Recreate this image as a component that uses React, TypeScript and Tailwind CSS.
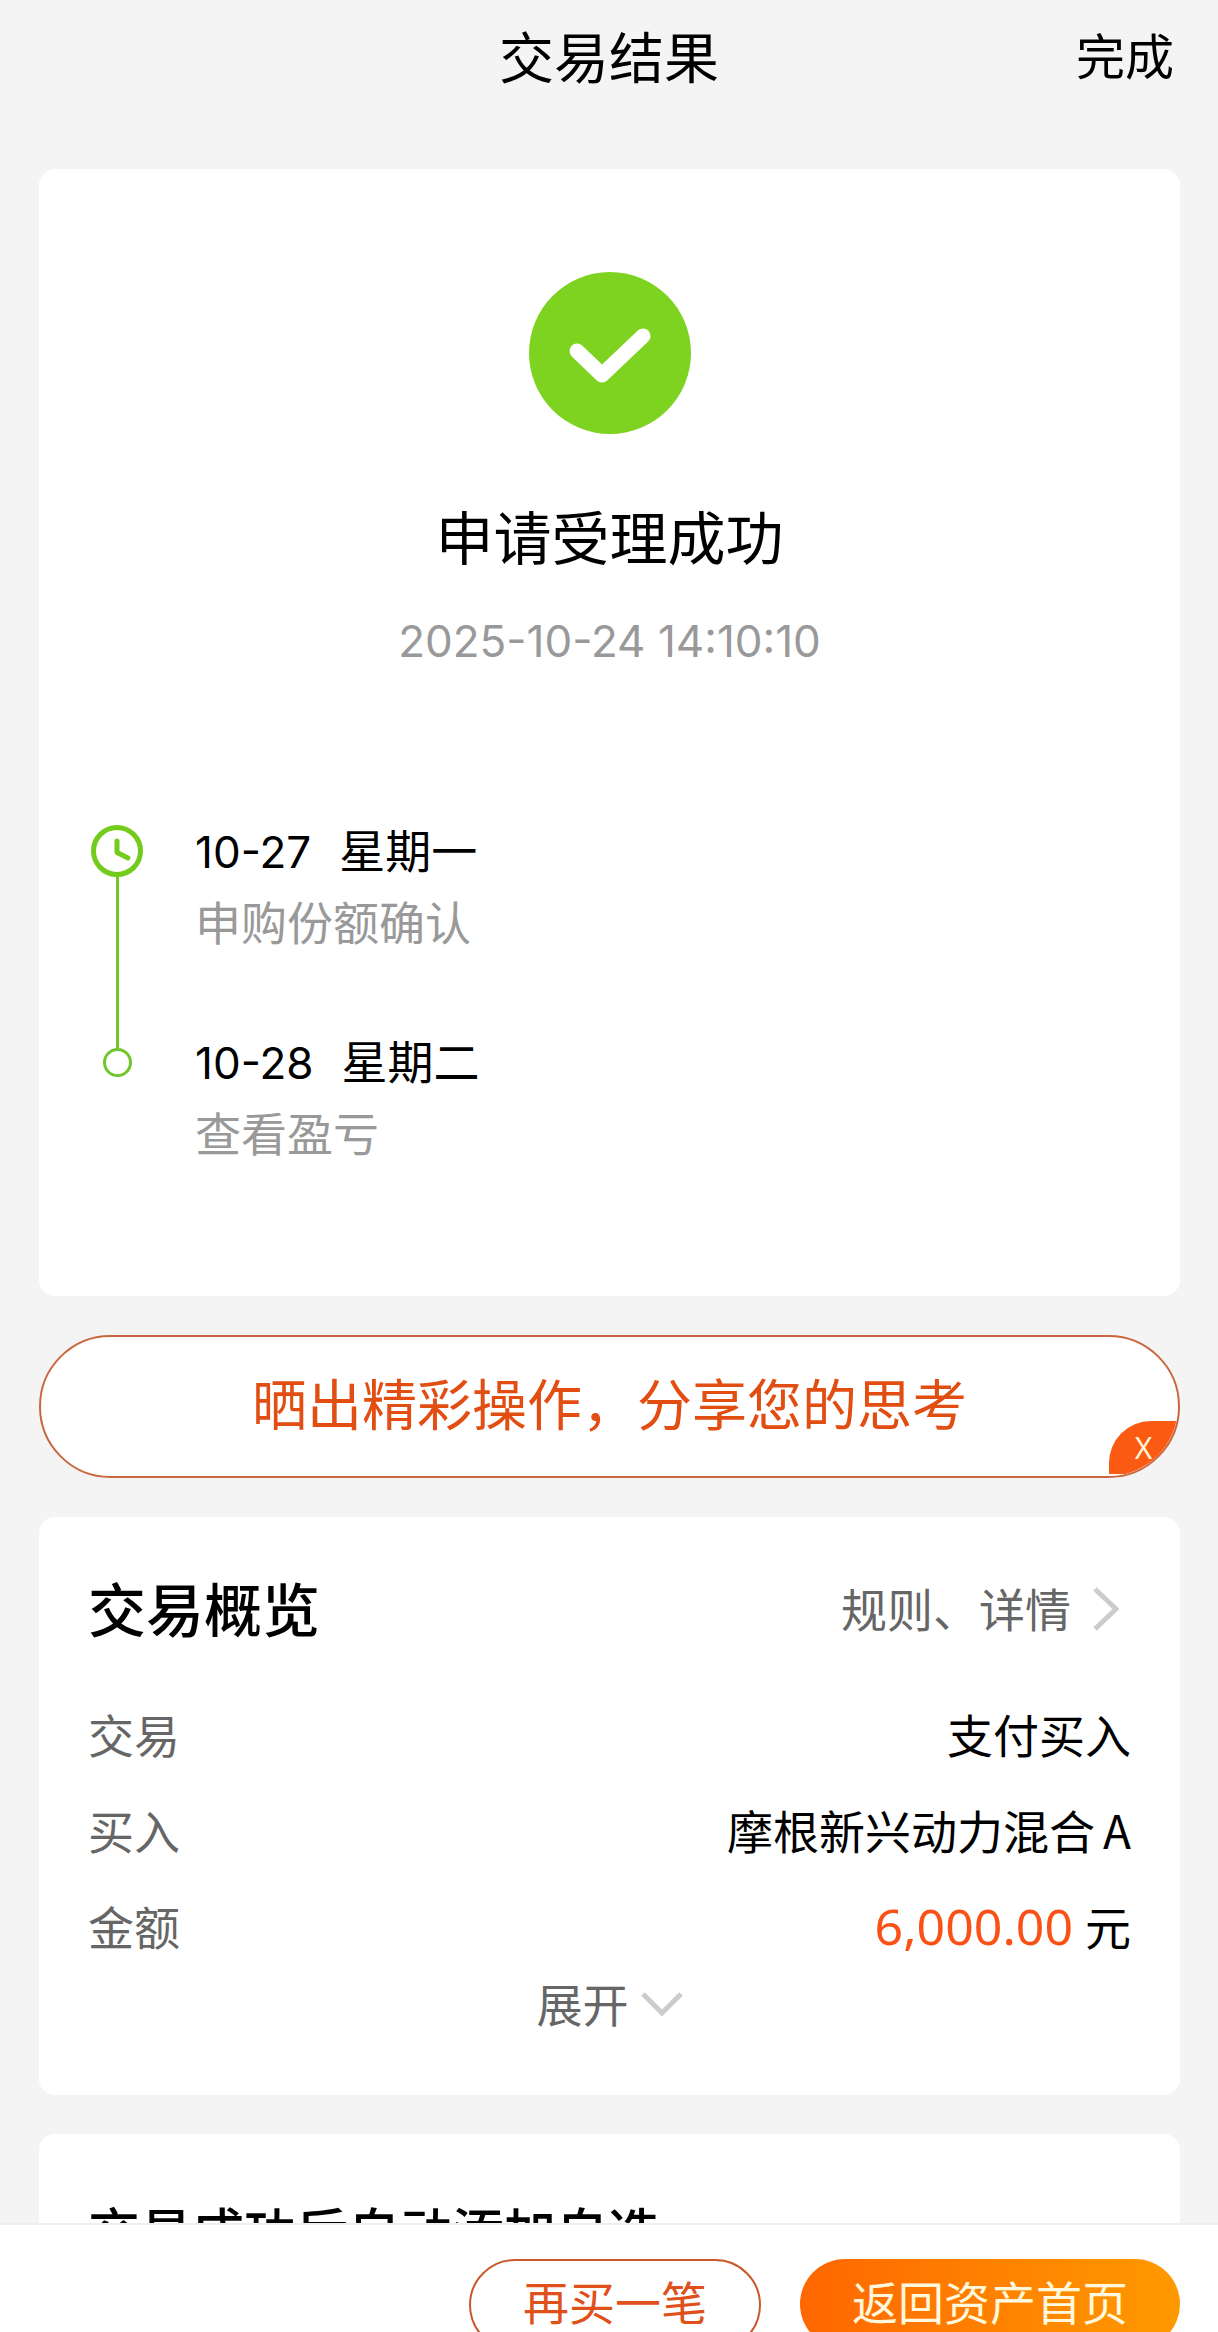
import React from 'react';

interface Step {
  date: string;
  weekday: string;
  note: string;
}

const steps: Step[] = [
  { date: '10-27', weekday: '星期一', note: '申购份额确认' },
  { date: '10-28', weekday: '星期二', note: '查看盈亏' },
];

const SuccessIcon = () => (
  <svg width="162" height="162" viewBox="0 0 162 162" fill="none" aria-hidden="true">
    <circle cx="81" cy="81" r="81" fill="#7ed321" />
    <path
      d="M48 79L73 103L114 64"
      stroke="#fff"
      strokeWidth="15"
      strokeLinecap="round"
      strokeLinejoin="round"
    />
  </svg>
);

const ClockIcon = () => (
  <svg width="52" height="52" viewBox="0 0 52 52" fill="none" stroke="#73cc1c" aria-hidden="true">
    <circle cx="26" cy="26" r="23.5" strokeWidth="5" />
    <path d="M26 16V27.5L37 33" strokeWidth="5" strokeLinecap="round" strokeLinejoin="round" />
  </svg>
);

const Header = () => (
  <header className="grid grid-cols-3 items-center px-[44px] pt-[22px] pb-[83px]">
    <h1 className="col-start-2 text-center text-[55px] leading-[64px]">交易结果</h1>
    <button className="justify-self-end text-[49px] leading-[64px]">完成</button>
  </header>
);

const ResultCard = () => (
  <section className="rounded-2xl bg-white px-[49px] pt-[103px] pb-[137px]">
    <div className="flex flex-col items-center">
      <SuccessIcon />
      <h2 className="mt-[61px] text-[58px] leading-[80px]">申请受理成功</h2>
      <p className="mt-9 font-['Inter','Noto_Sans_CJK_SC',sans-serif] text-[44px] leading-[60px] text-[#999]">
        2025-10-24 14:10:10
      </p>
    </div>

    <div className="mt-[149px] ml-[3px] flex gap-[52px]">
      <div className="flex flex-col items-center pt-[5px]">
        <ClockIcon />
        <span className="h-[171px] w-[3px] bg-[#73c52d]"></span>
        <span className="size-[29px] rounded-full border-[3px] border-[#73c52d]"></span>
      </div>
      <ol className="flex flex-col gap-[83px]">
        {steps.map((step) => (
          <li key={step.date} className="flex flex-col gap-3 text-[46px] leading-[56px]">
            <p className="flex items-baseline gap-7">
              <span className="font-['Inter','Noto_Sans_CJK_SC',sans-serif] text-[44px]">{step.date}</span>
              <span>{step.weekday}</span>
            </p>
            <p className="text-[#999]">{step.note}</p>
          </li>
        ))}
      </ol>
    </div>
  </section>
);

const ShareBanner = () => (
  <div className="relative overflow-hidden rounded-full border-2 border-[#c9683f] bg-white">
    <button className="w-full pt-8 pb-[43px] text-center text-[55px] leading-[64px] text-[#e24d12]">
      晒出精彩操作，分享您的思考
    </button>
    <button
      aria-label="关闭"
      className="absolute right-0 bottom-0.5 h-[53px] w-[69px] rounded-tl-[42px] bg-[#fa5a12] text-center font-['Noto_Sans',sans-serif] text-[30px] leading-[53px] text-[#fff3d6]"
    >
      X
    </button>
  </div>
);

const OverviewCard = () => (
  <section className="rounded-2xl bg-white px-[49px] pt-[50px] pb-[65px]">
    <div className="flex items-center justify-between">
      <h2 className="text-[58px] leading-[80px] font-medium">交易概览</h2>
      <a href="#detail" className="flex items-center gap-[22px] pr-3 text-[46px] leading-[56px] text-[#666]">
        规则、详情
        <svg className="mt-1" width="26" height="44" viewBox="0 0 26 44" fill="none" aria-hidden="true">
          <path d="M2 2L23 22L2 42" stroke="#ccc" strokeWidth="5" />
        </svg>
      </a>
    </div>

    <dl className="mt-[58px] flex flex-col gap-10 text-[46px] leading-[56px]">
      <div className="flex justify-between">
        <dt className="text-[#666]">交易</dt>
        <dd>支付买入</dd>
      </div>
      <div className="flex justify-between">
        <dt className="text-[#666]">买入</dt>
        <dd className="flex gap-2">
          摩根新兴动力混合<span>A</span>
        </dd>
      </div>
      <div className="flex justify-between">
        <dt className="text-[#666]">金额</dt>
        <dd className="flex items-baseline gap-3">
          <span className="font-['Noto_Sans',sans-serif] text-[50px] text-[#fa5116]">6,000.00</span>
          <span>元</span>
        </dd>
      </div>
    </dl>

    <button className="mx-auto mt-5 flex items-center gap-3 text-[46px] leading-[56px] text-[#666]">
      展开
      <svg className="mt-1" width="42" height="26" viewBox="0 0 42 26" fill="none" aria-hidden="true">
        <path d="M2 3L21 22L40 3" stroke="#ccc" strokeWidth="5" />
      </svg>
    </button>
  </section>
);

const BottomBar = () => (
  <footer className="flex h-[109px] shrink-0 items-start justify-end gap-[39px] overflow-hidden border-t-2 border-[#eee] bg-white px-[38px] pt-[34px]">
    <button className="rounded-full border-2 border-[#c9582b] px-[52px] pt-[11px] pb-[21px] text-[46px] leading-[56px] text-[#e0501a]">
      再买一笔
    </button>
    <button className="rounded-full bg-linear-to-r from-[#ff6600] to-[#ff9900] px-[52px] pt-[13px] pb-[21px] text-[46px] leading-[56px] text-[#fff8dc]">
      返回资产首页
    </button>
  </footer>
);

const App: React.FC = () => {
  return (
    <div className="flex h-screen flex-col bg-[#f4f4f4] font-['Noto_Sans_CJK_SC',sans-serif] text-black">
      <div className="min-h-0 flex-1 overflow-hidden">
        <Header />
        <main className="flex flex-col gap-[39px] pr-[38px] pl-[39px]">
          <ResultCard />
          <ShareBanner />
          <OverviewCard />
          <section className="rounded-t-2xl bg-white px-[49px] pt-[60px] pb-12">
            <h2 className="text-[52px] leading-[72px] font-medium">交易成功后自动添加自选</h2>
          </section>
        </main>
      </div>
      <BottomBar />
    </div>
  );
};

export default App;
